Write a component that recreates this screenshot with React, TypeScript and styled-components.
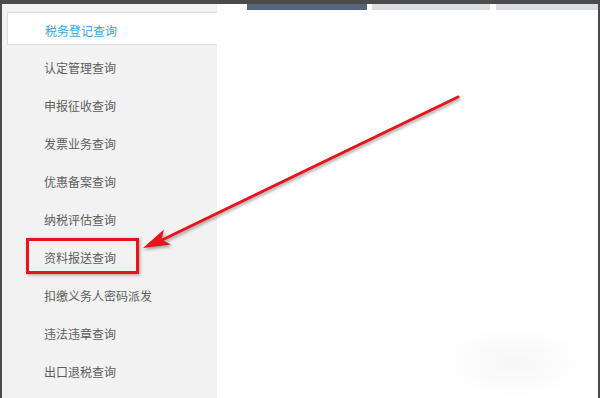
import styled, { createGlobalStyle } from "styled-components";

const GlobalStyle = createGlobalStyle`
  html, body {
    margin: 0;
    padding: 0;
    background: #ffffff;
  }
  body {
    font-family: "Liberation Sans", "Noto Sans CJK SC", sans-serif;
  }
`;

const menu = [
  "税务登记查询",
  "认定管理查询",
  "申报征收查询",
  "发票业务查询",
  "优惠备案查询",
  "纳税评估查询",
  "资料报送查询",
  "扣缴义务人密码派发",
  "违法违章查询",
  "出口退税查询",
];

const tabs = [
  { width: 120, active: true },
  { width: 118, active: false },
  { width: 102, active: false },
];

export default function App() {
  return (
    <>
      <GlobalStyle />
      <Page>
        <TopBar />
        <Body>
          <Sidebar>
            {menu.map((label, i) => (
              <MenuItem key={label} $active={i === 0} $marked={i === 6}>
                {label}
              </MenuItem>
            ))}
          </Sidebar>
          <Main>
            <TabStrip>
              {tabs.map((t, i) => (
                <Tab key={i} $active={t.active} style={{ width: t.width }} />
              ))}
            </TabStrip>
            <Content />
          </Main>
        </Body>
        <Arrow viewBox="0 0 600 398" width="600" height="398">
          <line x1="458" y1="97" x2="162" y2="240" stroke="#e8141c" strokeWidth="3" strokeLinecap="round" />
          <polygon points="143,248 164,229.5 161.5,239.5 171,244.5" fill="#e8141c" />
        </Arrow>
      </Page>
    </>
  );
}

const Page = styled.div`
  position: relative;
  width: 600px;
  height: 398px;
  box-sizing: border-box;
  border-left: 2px solid #4b4b4b;
  border-right: 2px solid #4b4b4b;
  display: flex;
  flex-direction: column;
  overflow: hidden;
`;

const TopBar = styled.div`
  height: 4px;
  background: #4b4b4b;
  flex-shrink: 0;
`;

const Body = styled.div`
  flex: 1;
  display: flex;
`;

const Sidebar = styled.div`
  width: 215px;
  background: #f2f2f2;
  padding: 8px 0 0 5px;
  box-sizing: border-box;
  display: flex;
  flex-direction: column;
`;

const MenuItem = styled.div<{ $active?: boolean; $marked?: boolean }>`
  position: relative;
  flex-shrink: 0;
  height: ${(p) => (p.$active ? "33px" : "37.9px")};
  margin-bottom: ${(p) => (p.$active ? "4px" : "0")};
  padding: ${(p) => (p.$active ? "4px 0 0 37px" : "0 0 0 37px")};
  box-sizing: border-box;
  display: flex;
  align-items: center;
  font-size: 12px;
  color: ${(p) => (p.$active ? "#35a6dc" : "#5e5e5e")};
  background: ${(p) => (p.$active ? "#ffffff" : "transparent")};
  border: ${(p) => (p.$active ? "1px solid #dedede" : "none")};
  border-right: none;

  ${(p) =>
    p.$marked &&
    `
    &::after {
      content: "";
      position: absolute;
      left: 19px;
      top: 0;
      width: 113px;
      height: 36px;
      box-sizing: border-box;
      border: 3px solid #e8141c;
      box-shadow: 1px 1px 3px rgba(0, 0, 0, 0.35);
    }
  `}
`;

const Main = styled.div`
  flex: 1;
  display: flex;
  flex-direction: column;
`;

const TabStrip = styled.div`
  height: 6px;
  display: flex;
  gap: 5px;
  padding-left: 30px;

  & > *:last-child {
    margin-left: 1px;
  }
`;

const Tab = styled.div<{ $active?: boolean }>`
  height: 6px;
  background: ${(p) => (p.$active ? "#56657c" : "#d9dce1")};
`;

const Content = styled.div`
  flex: 1;
  background: radial-gradient(ellipse 72px 36px at 296px 352px, #f6f6f6, #ffffff);
`;

const Arrow = styled.svg`
  position: absolute;
  left: -2px;
  top: 0;
  pointer-events: none;
  filter: drop-shadow(1px 2px 1.5px rgba(0, 0, 0, 0.35));
`;
